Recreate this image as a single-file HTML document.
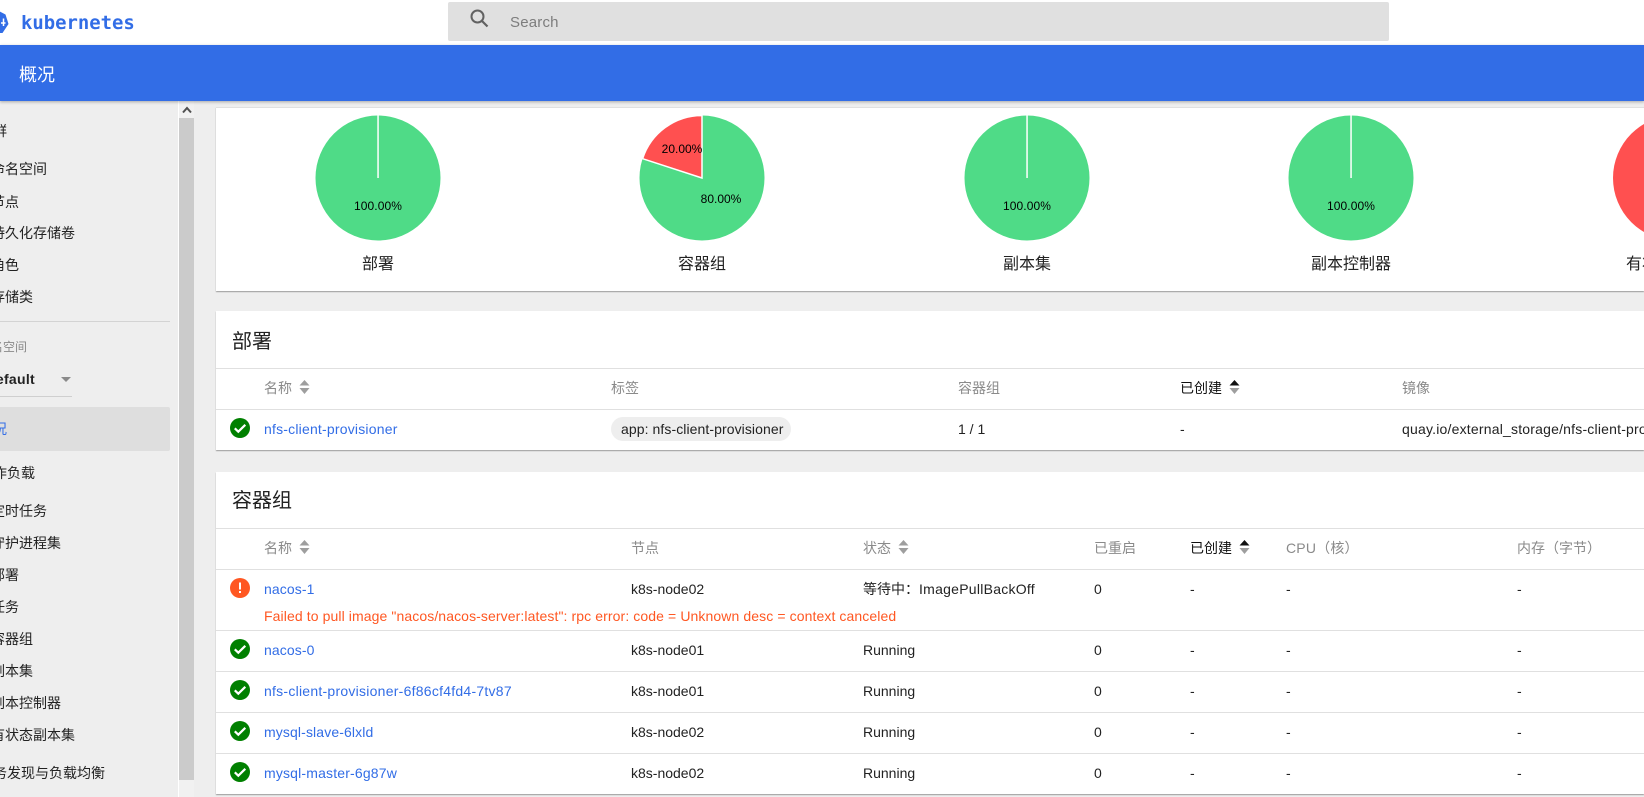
<!DOCTYPE html>
<html lang="zh">
<head>
<meta charset="utf-8">
<title>概况 - Kubernetes Dashboard</title>
<style>
html,body{margin:0;padding:0;width:1644px;height:797px;overflow:hidden;background:#eee;}
body{position:relative;font-family:"Liberation Sans","Noto Sans CJK SC",sans-serif;font-size:14px;color:rgba(0,0,0,.87);}
.a{position:absolute;white-space:nowrap;line-height:20px;height:20px;}
.b{position:absolute;}
.s{color:#222;}
.h{color:#8a8a8a;}
.d{color:#111;}
.l{color:#326de6;}
.c{color:#222;}
.line{position:absolute;left:216px;width:1428px;height:1px;background:#e0e0e0;}
.card{position:absolute;left:216px;width:1428px;background:#fff;box-shadow:0 1px 1px rgba(0,0,0,.35);}
svg{position:absolute;display:block;}
</style>
</head>
<body>
<!-- top bar -->
<div class="b" style="left:0;top:0;width:1644px;height:45px;background:#fff;"></div>
<svg style="left:-15px;top:10px;" width="24" height="25" viewBox="0 0 24 25"><path d="M12 0 L20.500 4.500 L23.500 14 L17.500 23 L6.500 23 L.5 14 L3.500 4.500Z" fill="#326de6"/><path d="M18.500 8.500v7.500" stroke="#fff" stroke-width="1.500"/><path d="M16 13h4.500" stroke="#fff" stroke-width="1.500"/></svg>
<div class="a" style="left:21px;top:13px;font-family:'DejaVu Sans Mono','Liberation Mono',monospace;font-weight:bold;font-size:18.900px;color:#326de6;">kubernetes</div>
<div class="b" style="left:448px;top:2px;width:941px;height:39px;background:#e0e0e0;border-radius:2px;"></div>
<svg style="left:468px;top:9px;" width="22" height="22" viewBox="0 0 22 22"><circle cx="9.500" cy="7.500" r="6" fill="none" stroke="#616161" stroke-width="2"/><path d="M14 12 L19.500 17.500" stroke="#616161" stroke-width="2.200"/></svg>
<div class="a" style="left:510px;top:13px;font-size:15px;letter-spacing:.2px;color:#7d7d7d;">Search</div>
<div class="b" style="left:0;top:45px;width:1644px;height:56px;background:#326de6;box-shadow:0 1px 3px rgba(0,0,0,.3);z-index:5;"></div>
<div class="a" style="left:19px;top:65px;font-size:18px;color:#fff;z-index:6;">概况</div>

<!-- sidebar -->
<div class="b" style="left:0;top:101px;width:178px;height:696px;background:#eee;"></div>
<div class="a s" style="left:-21px;top:121px;">集群</div>
<div class="a s" style="left:-9px;top:159px;">命名空间</div>
<div class="a s" style="left:-9px;top:192px;">节点</div>
<div class="a s" style="left:-9px;top:223px;">持久化存储卷</div>
<div class="a s" style="left:-9px;top:255px;">角色</div>
<div class="a s" style="left:-9px;top:287px;">存储类</div>
<div class="b" style="left:0;top:321px;width:170px;height:1px;background:#d3d3d3;"></div>
<div class="a" style="left:-21px;top:337px;font-size:12px;color:#8a8a8a;">命名空间</div>
<div class="a" style="left:-13px;top:369px;color:#222;font-weight:bold;font-size:14px;letter-spacing:.3px;">default</div>
<div class="b" style="left:61px;top:377px;width:0;height:0;border-left:5px solid transparent;border-right:5px solid transparent;border-top:5px solid #8a8a8a;"></div>
<div class="b" style="left:0;top:396px;width:72px;height:1px;background:#cfcfcf;"></div>
<div class="b" style="left:0;top:407px;width:170px;height:44px;background:#dedede;border-radius:0 2px 2px 0;"></div>
<div class="a l" style="left:-21px;top:419px;">概况</div>
<div class="a s" style="left:-21px;top:463px;">工作负载</div>
<div class="a s" style="left:-9px;top:501px;">定时任务</div>
<div class="a s" style="left:-9px;top:533px;">守护进程集</div>
<div class="a s" style="left:-9px;top:565px;">部署</div>
<div class="a s" style="left:-9px;top:597px;">任务</div>
<div class="a s" style="left:-9px;top:629px;">容器组</div>
<div class="a s" style="left:-9px;top:661px;">副本集</div>
<div class="a s" style="left:-9px;top:693px;">副本控制器</div>
<div class="a s" style="left:-9px;top:725px;">有状态副本集</div>
<div class="a s" style="left:-21px;top:763px;">服务发现与负载均衡</div>

<!-- scrollbar -->
<div class="b" style="left:178px;top:101px;width:1px;height:696px;background:#fff;"></div>
<div class="b" style="left:179px;top:101px;width:15px;height:696px;background:#f1f1f1;"></div>
<div class="b" style="left:179px;top:118px;width:15px;height:662px;background:#cbcbcb;"></div>
<svg style="left:182px;top:106px;" width="10" height="8" viewBox="0 0 10 8"><path d="M1 6.500 L5 2 L9 6.500" fill="none" stroke="#505050" stroke-width="2"/></svg>

<!-- card 1: status -->
<div class="card" style="top:107px;height:183px;border-top:1px solid #e0e0e0;"></div>
<svg style="left:0;top:0;" width="1644" height="300" viewBox="0 0 1644 300">
<circle cx="378" cy="178" r="62.500" fill="#4fdb87"/><rect x="377.300" y="115" width="1.500" height="63" fill="#fff"/>
<circle cx="702" cy="178" r="62.500" fill="#4fdb87"/><path d="M702 178 L642.600 158.700 A62.500 62.500 0 0 1 702 115.500Z" fill="#ff5050" stroke="#fff" stroke-width="1.500"/>
<circle cx="1027" cy="178" r="62.500" fill="#4fdb87"/><rect x="1026.300" y="115" width="1.500" height="63" fill="#fff"/>
<circle cx="1351" cy="178" r="62.500" fill="#4fdb87"/><rect x="1350.300" y="115" width="1.500" height="63" fill="#fff"/>
<circle cx="1675.500" cy="178" r="62.500" fill="#ff5050"/>
</svg>
<div class="a" style="left:338px;width:80px;text-align:center;top:196px;font-size:12px;color:#000;letter-spacing:.1px;">100.00%</div>
<div class="a" style="left:642px;width:80px;text-align:center;top:139px;font-size:12px;color:#000;">20.00%</div>
<div class="a" style="left:681px;width:80px;text-align:center;top:189px;font-size:12px;color:#000;">80.00%</div>
<div class="a" style="left:987px;width:80px;text-align:center;top:196px;font-size:12px;color:#000;letter-spacing:.1px;">100.00%</div>
<div class="a" style="left:1311px;width:80px;text-align:center;top:196px;font-size:12px;color:#000;letter-spacing:.1px;">100.00%</div>
<div class="a c" style="left:328px;width:100px;text-align:center;top:255px;font-size:16px;">部署</div>
<div class="a c" style="left:652px;width:100px;text-align:center;top:255px;font-size:16px;">容器组</div>
<div class="a c" style="left:977px;width:100px;text-align:center;top:255px;font-size:16px;">副本集</div>
<div class="a c" style="left:1301px;width:100px;text-align:center;top:255px;font-size:16px;">副本控制器</div>
<div class="a c" style="left:1626px;top:255px;font-size:16px;">有状态副本集</div>

<!-- card 2: deployments -->
<div class="card" style="top:311px;height:139px;"></div>
<div class="a c" style="left:232px;top:332px;font-size:20px;line-height:20px;">部署</div>
<div class="line" style="top:368px;"></div>
<div class="line" style="top:409px;"></div>
<div class="a h" style="left:264px;top:378px;">名称</div>
<svg style="left:299px;top:380px;" width="11" height="14" viewBox="0 0 11 14"><path d="M5.500 0 L10.500 5.500 H.5Z" fill="#9e9e9e"/><path d="M5.500 14 L10.500 8 H.5Z" fill="#9e9e9e"/></svg>
<div class="a h" style="left:611px;top:378px;">标签</div>
<div class="a h" style="left:958px;top:378px;">容器组</div>
<div class="a d" style="left:1180px;top:378px;">已创建</div>
<svg style="left:1229px;top:380px;" width="11" height="14" viewBox="0 0 11 14"><path d="M5.500 0 L10.500 5.500 H.5Z" fill="#111"/><path d="M5.500 14 L10.500 8 H.5Z" fill="#9e9e9e"/></svg>
<div class="a h" style="left:1402px;top:378px;">镜像</div>
<svg style="left:230px;top:418px;" width="20" height="20" viewBox="0 0 20 20"><circle cx="10" cy="10" r="10" fill="#008000"/><path d="M4.800 10.300 L8.300 13.700 L15.300 6.800" fill="none" stroke="#fff" stroke-width="2.200"/></svg>
<div class="a l" style="left:264px;top:419px;letter-spacing:.2px;">nfs-client-provisioner</div>
<div class="b" style="left:611px;top:417px;width:180px;height:24px;background:#eee;border-radius:12px;"></div>
<div class="a c" style="left:621px;top:419px;letter-spacing:.08px;">app: nfs-client-provisioner</div>
<div class="a c" style="left:958px;top:419px;">1 / 1</div>
<div class="a c" style="left:1180px;top:419px;">-</div>
<div class="a c" style="left:1402px;top:419px;letter-spacing:.2px;">quay.io/external_storage/nfs-client-provisioner:latest</div>

<!-- card 3: pods -->
<div class="card" style="top:472px;height:322px;"></div>
<div class="a c" style="left:232px;top:491px;font-size:20px;">容器组</div>
<div class="line" style="top:528px;"></div>
<div class="line" style="top:569px;"></div>
<div class="line" style="top:630px;"></div>
<div class="line" style="top:671px;"></div>
<div class="line" style="top:712px;"></div>
<div class="line" style="top:753px;"></div>

<div class="a h" style="left:264px;top:538px;">名称</div>
<svg style="left:299px;top:540px;" width="11" height="14" viewBox="0 0 11 14"><path d="M5.500 0 L10.500 5.500 H.5Z" fill="#9e9e9e"/><path d="M5.500 14 L10.500 8 H.5Z" fill="#9e9e9e"/></svg>
<div class="a h" style="left:631px;top:538px;">节点</div>
<div class="a h" style="left:863px;top:538px;">状态</div>
<svg style="left:898px;top:540px;" width="11" height="14" viewBox="0 0 11 14"><path d="M5.500 0 L10.500 5.500 H.5Z" fill="#9e9e9e"/><path d="M5.500 14 L10.500 8 H.5Z" fill="#9e9e9e"/></svg>
<div class="a h" style="left:1094px;top:538px;">已重启</div>
<div class="a d" style="left:1190px;top:538px;">已创建</div>
<svg style="left:1239px;top:540px;" width="11" height="14" viewBox="0 0 11 14"><path d="M5.500 0 L10.500 5.500 H.5Z" fill="#111"/><path d="M5.500 14 L10.500 8 H.5Z" fill="#9e9e9e"/></svg>
<div class="a h" style="left:1286px;top:538px;letter-spacing:.2px;">CPU（核）</div>
<div class="a h" style="left:1517px;top:538px;">内存（字节）</div>

<!-- row 1 -->
<svg style="left:230px;top:578px;" width="20" height="20" viewBox="0 0 20 20"><circle cx="10" cy="10" r="10" fill="#ff5722"/><rect x="9" y="4.500" width="2" height="7" fill="#fff"/><rect x="9" y="13" width="2" height="2" fill="#fff"/></svg>
<div class="a l" style="left:264px;top:579px;letter-spacing:.1px;">nacos-1</div>
<div class="a c" style="left:631px;top:579px;">k8s-node02</div>
<div class="a c" style="left:863px;top:579px;">等待中：<span style="letter-spacing:.26px;">ImagePullBackOff</span></div>
<div class="a c" style="left:1094px;top:579px;">0</div>
<div class="a c" style="left:1190px;top:579px;">-</div>
<div class="a c" style="left:1286px;top:579px;">-</div>
<div class="a c" style="left:1517px;top:579px;">-</div>
<div class="a" style="left:264px;top:606px;color:#ff5722;letter-spacing:.1px;">Failed to pull image "nacos/nacos-server:latest": rpc error: code = Unknown desc = context canceled</div>

<!-- row 2 -->
<svg style="left:230px;top:639px;" width="20" height="20" viewBox="0 0 20 20"><circle cx="10" cy="10" r="10" fill="#008000"/><path d="M4.800 10.300 L8.300 13.700 L15.300 6.800" fill="none" stroke="#fff" stroke-width="2.200"/></svg>
<div class="a l" style="left:264px;top:640px;letter-spacing:.1px;">nacos-0</div>
<div class="a c" style="left:631px;top:640px;">k8s-node01</div>
<div class="a c" style="left:863px;top:640px;">Running</div>
<div class="a c" style="left:1094px;top:640px;">0</div>
<div class="a c" style="left:1190px;top:640px;">-</div>
<div class="a c" style="left:1286px;top:640px;">-</div>
<div class="a c" style="left:1517px;top:640px;">-</div>

<!-- row 3 -->
<svg style="left:230px;top:680px;" width="20" height="20" viewBox="0 0 20 20"><circle cx="10" cy="10" r="10" fill="#008000"/><path d="M4.800 10.300 L8.300 13.700 L15.300 6.800" fill="none" stroke="#fff" stroke-width="2.200"/></svg>
<div class="a l" style="left:264px;top:681px;letter-spacing:.25px;">nfs-client-provisioner-6f86cf4fd4-7tv87</div>
<div class="a c" style="left:631px;top:681px;">k8s-node01</div>
<div class="a c" style="left:863px;top:681px;">Running</div>
<div class="a c" style="left:1094px;top:681px;">0</div>
<div class="a c" style="left:1190px;top:681px;">-</div>
<div class="a c" style="left:1286px;top:681px;">-</div>
<div class="a c" style="left:1517px;top:681px;">-</div>

<!-- row 4 -->
<svg style="left:230px;top:721px;" width="20" height="20" viewBox="0 0 20 20"><circle cx="10" cy="10" r="10" fill="#008000"/><path d="M4.800 10.300 L8.300 13.700 L15.300 6.800" fill="none" stroke="#fff" stroke-width="2.200"/></svg>
<div class="a l" style="left:264px;top:722px;letter-spacing:.12px;">mysql-slave-6lxld</div>
<div class="a c" style="left:631px;top:722px;">k8s-node02</div>
<div class="a c" style="left:863px;top:722px;">Running</div>
<div class="a c" style="left:1094px;top:722px;">0</div>
<div class="a c" style="left:1190px;top:722px;">-</div>
<div class="a c" style="left:1286px;top:722px;">-</div>
<div class="a c" style="left:1517px;top:722px;">-</div>

<!-- row 5 -->
<svg style="left:230px;top:762px;" width="20" height="20" viewBox="0 0 20 20"><circle cx="10" cy="10" r="10" fill="#008000"/><path d="M4.800 10.300 L8.300 13.700 L15.300 6.800" fill="none" stroke="#fff" stroke-width="2.200"/></svg>
<div class="a l" style="left:264px;top:763px;letter-spacing:.17px;">mysql-master-6g87w</div>
<div class="a c" style="left:631px;top:763px;">k8s-node02</div>
<div class="a c" style="left:863px;top:763px;">Running</div>
<div class="a c" style="left:1094px;top:763px;">0</div>
<div class="a c" style="left:1190px;top:763px;">-</div>
<div class="a c" style="left:1286px;top:763px;">-</div>
<div class="a c" style="left:1517px;top:763px;">-</div>
</body>
</html>
